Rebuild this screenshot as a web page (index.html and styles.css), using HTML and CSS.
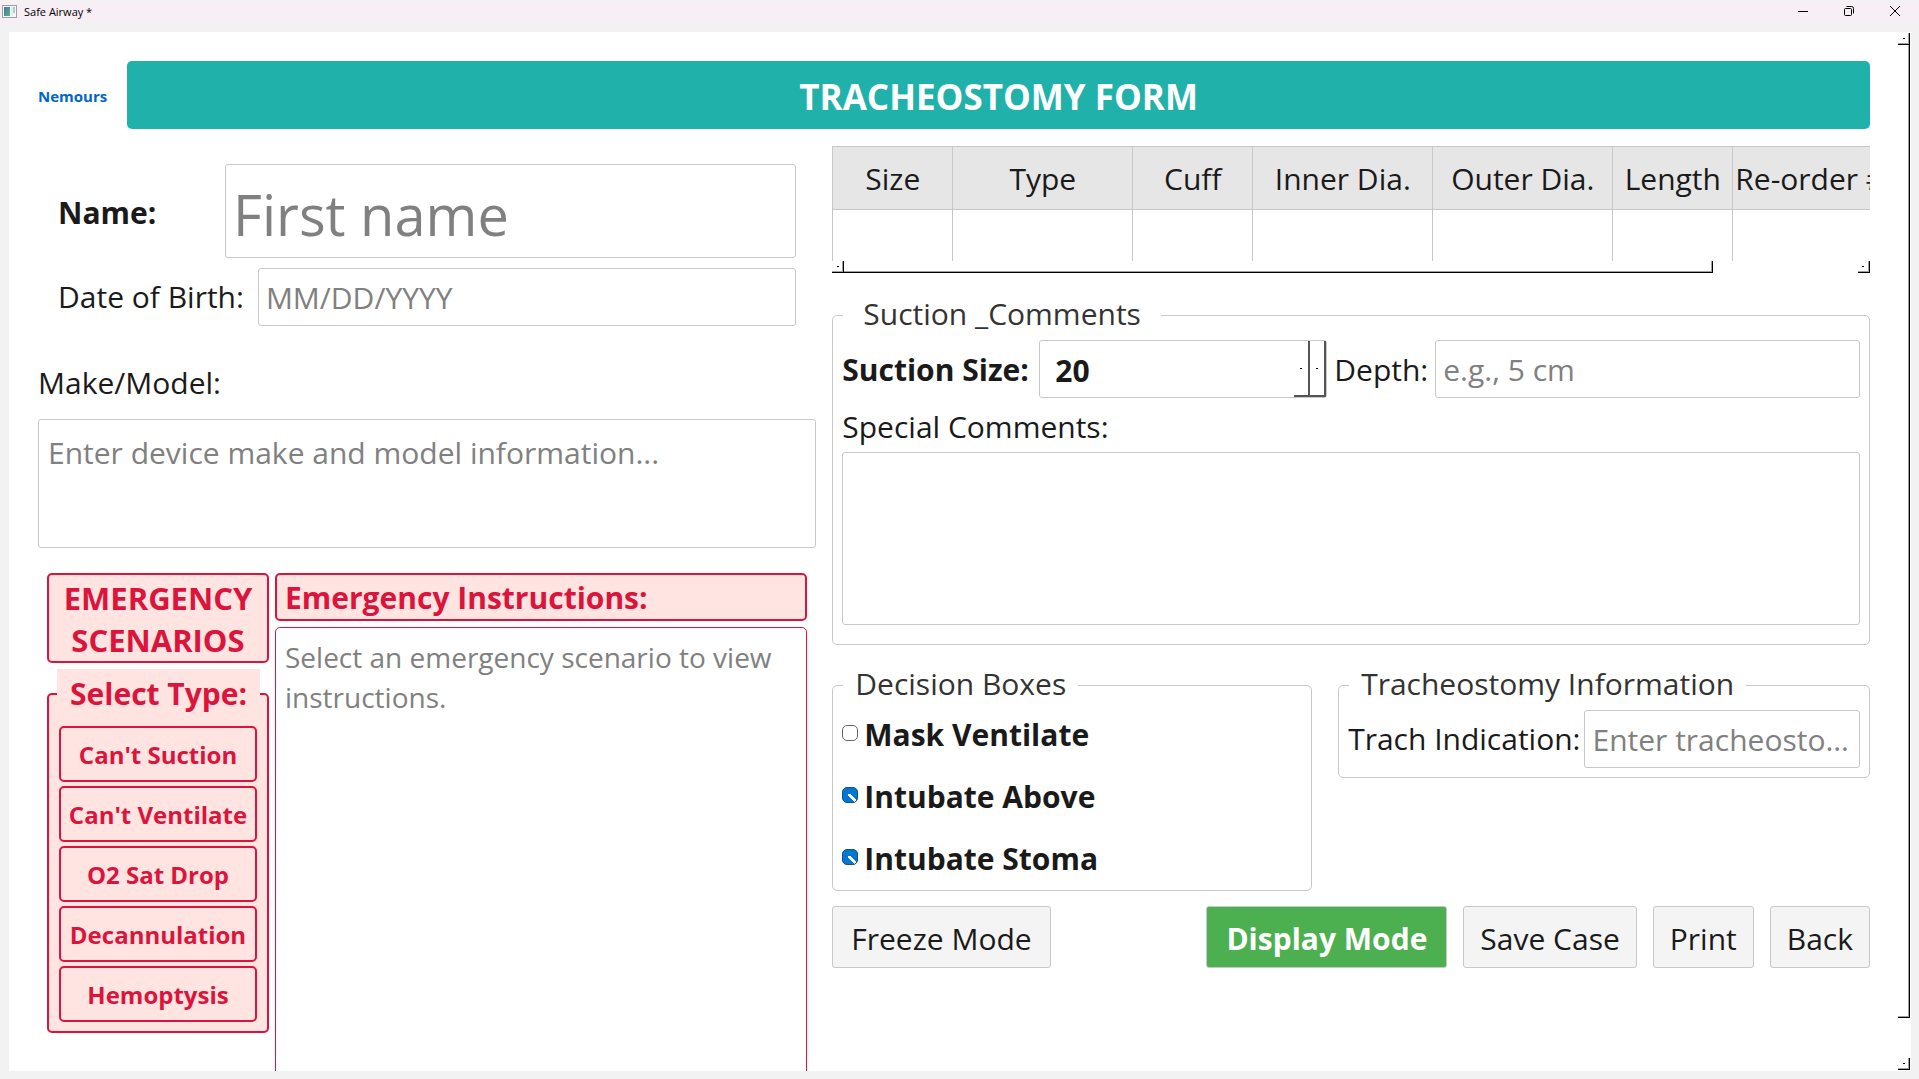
FILE: index.html
```html
<!DOCTYPE html>
<html lang="en">
<head>
<meta charset="utf-8">
<title>Safe Airway *</title>
<link rel="stylesheet" href="styles.css">
</head>
<body>
<header class="titlebar">
  <svg class="app-icon" width="15" height="13" viewBox="0 0 15 13" aria-hidden="true">
    <defs><linearGradient id="pane" x1="0" y1="0" x2="1" y2="1"><stop offset="0" stop-color="#3a7ca8"/><stop offset="1" stop-color="#5fae84"/></linearGradient></defs>
    <rect x="0.5" y="0.5" width="14" height="12" fill="#f4f6f8" stroke="#9aa0a8"/>
    <rect x="2" y="2" width="6" height="9" fill="url(#pane)"/>
    <rect x="9" y="2" width="2" height="9" fill="#e4eaee"/>
    <rect x="11" y="2" width="2" height="6" fill="#a9d0d8"/>
  </svg>
  <span class="app-title">Safe Airway *</span>
  <div class="window-controls">
    <button type="button" aria-label="Minimize"><svg width="12" height="12" viewBox="0 0 12 12"><path d="M1 6.5h10" /></svg></button>
    <button type="button" aria-label="Restore"><svg width="12" height="12" viewBox="0 0 12 12"><rect x="1.500" y="3.500" width="7" height="7" rx="1"/><path d="M3.500 1.500h5q2 0 2 2v5"/></svg></button>
    <button type="button" aria-label="Close"><svg width="12" height="12" viewBox="0 0 12 12"><path d="M1 1l10 10M11 1L1 11"/></svg></button>
  </div>
</header>

<main class="panel">
  <div class="content">
    <div class="banner">
      <a class="brand" href="#">Nemours</a>
      <h1>TRACHEOSTOMY FORM</h1>
    </div>

    <form class="columns">
      <section class="left">
        <div class="identity">
          <div class="field">
            <label class="strong name-label" for="name">Name:</label>
            <input class="name-input" id="name" type="text" placeholder="First name">
          </div>
          <div class="field">
            <label for="dob">Date of Birth:</label>
            <input id="dob" type="text" placeholder="MM/DD/YYYY">
          </div>
        </div>

        <label class="make-label" for="make">Make/Model:</label>
        <textarea class="make" id="make" placeholder="Enter device make and model information..."></textarea>

        <div class="emergency">
          <div class="scenarios">
            <h2 class="alert-title centered">EMERGENCY SCENARIOS</h2>
            <fieldset class="types">
              <legend>Select Type:</legend>
              <button type="button">Can't Suction</button>
              <button type="button">Can't Ventilate</button>
              <button type="button">O2 Sat Drop</button>
              <button type="button">Decannulation</button>
              <button type="button">Hemoptysis</button>
            </fieldset>
          </div>
          <div class="instructions">
            <label class="alert-title" for="steps">Emergency Instructions:</label>
            <textarea class="steps" id="steps" placeholder="Select an emergency scenario to view instructions."></textarea>
          </div>
        </div>
      </section>

      <section class="right">
        <div class="sizes">
          <div class="table-view">
            <table>
              <colgroup><col class="narrow"><col class="wide"><col class="narrow"><col class="wide"><col class="wide"><col class="narrow"><col class="last"></colgroup>
              <thead>
                <tr><th>Size</th><th>Type</th><th>Cuff</th><th>Inner Dia.</th><th>Outer Dia.</th><th>Length</th><th class="reorder">Re-order #</th></tr>
              </thead>
              <tbody>
                <tr><td></td><td></td><td></td><td></td><td></td><td></td><td></td></tr>
              </tbody>
            </table>
          </div>
          <div class="scroll horizontal" aria-hidden="true">
            <span class="arrow"></span><span class="thumb"></span><span class="rest"></span><span class="arrow"></span>
          </div>
        </div>

        <fieldset class="group suction">
          <legend>Suction _Comments</legend>
          <div class="suction-row">
            <label class="strong" for="suction">Suction Size:</label>
            <div class="spin">
              <input class="strong" id="suction" type="number" value="20">
              <button type="button" aria-label="Decrease"></button>
              <button type="button" aria-label="Increase"></button>
            </div>
            <label for="depth">Depth:</label>
            <input class="depth" id="depth" type="text" placeholder="e.g., 5 cm">
          </div>
          <label class="comments-label" for="comments">Special Comments:</label>
          <textarea class="comments" id="comments"></textarea>
        </fieldset>

        <div class="groups">
          <fieldset class="group decisions">
            <legend>Decision Boxes</legend>
            <label class="check strong"><input type="checkbox">Mask Ventilate</label>
            <label class="check strong"><input type="checkbox" checked>Intubate Above</label>
            <label class="check strong"><input type="checkbox" checked>Intubate Stoma</label>
          </fieldset>
          <fieldset class="group trach">
            <legend>Tracheostomy Information</legend>
            <div class="trach-row">
              <label for="indication">Trach Indication:</label>
              <input id="indication" type="text" placeholder="Enter tracheostomy indication">
            </div>
          </fieldset>
        </div>

        <div class="actions">
          <button type="button" class="freeze">Freeze Mode</button>
          <button type="button" class="primary">Display Mode</button>
          <button type="button">Save Case</button>
          <button type="button">Print</button>
          <button type="button">Back</button>
        </div>
      </section>
    </form>
  </div>

  <div class="scroll vertical" aria-hidden="true">
    <span class="arrow"></span><span class="thumb"></span><span class="rest"></span><span class="arrow"></span>
  </div>
</main>
</body>
</html>
```
FILE: styles.css
```css
* { box-sizing: border-box; }

body {
  margin: 0;
  height: 100vh;
  display: flex;
  flex-direction: column;
  overflow: hidden;
  background: #f2f2f2;
  color: #1a1a1a;
  font: 30px/44px "Open Sans", "Noto Sans", sans-serif;
}

h1, h2, fieldset, legend { margin: 0; padding: 0; }

input, textarea, button { font: inherit; color: inherit; margin: 0; }

input, textarea {
  min-width: 0;
  background: #fff;
  border: 1px solid #c8c8c8;
  border-radius: 3px;
  padding: 1px 7px 0;
  height: 58px;
}

textarea { display: block; width: 100%; resize: none; overflow: hidden; }

::placeholder { color: #808080; opacity: 1; }

.strong { font-weight: 700; }

/* Window title bar */
.titlebar {
  display: flex;
  align-items: center;
  height: 23px;
  margin-bottom: 9px;
  padding: 0 18px 2px 2px;
  border-top: 2px solid #f2f2f2;
  background: #f8eef6;
}

.app-title { margin-left: 7px; color: #000; font-size: 11px; line-height: 18px; }

.window-controls { display: flex; gap: 34px; margin-left: auto; padding-bottom: 2px; }

.window-controls button { display: flex; padding: 0; border: 0; background: none; }

.window-controls svg { fill: none; stroke: #000; stroke-width: 1; }

/* Scrolled page */
.panel {
  flex: 1;
  min-height: 0;
  display: flex;
  margin: 0 8px 8px 9px;
  overflow: hidden;
  background: #fff;
}

.content { flex: 1; min-width: 0; padding: 29px 28px 0 29px; }

.banner { display: flex; align-items: center; gap: 20px; }

.brand { padding-top: 2px; color: #06c; font-size: 15px; font-weight: 700; line-height: 20px; text-decoration: none; }

h1 {
  flex: 1;
  padding-top: 4px;
  border-radius: 5px;
  background: #20b2aa;
  color: #fff;
  font-size: 35px;
  line-height: 64px;
  text-align: center;
}

.columns { display: grid; grid-template-columns: minmax(0, 3fr) minmax(0, 4fr); gap: 16px; }

/* Patient and device */
.identity { display: grid; grid-template-columns: minmax(0, 1fr); gap: 10px; padding: 35px 20px 0; }

.field { display: flex; align-items: center; gap: 14px; }

.field input { flex: 1; }

.name-label { min-width: 153px; padding-top: 4px; }

.name-input { height: 94px; padding-top: 6px; font-size: 56px; line-height: 80px; }

.make-label { display: block; padding: 35px 0 14px; }

.make { height: 129px; padding: 11px 9px; }

/* Emergency area */
.emergency {
  display: grid;
  grid-template-columns: 222px minmax(0, 1fr);
  gap: 6px;
  padding: 25px 9px 0;
  color: #dc143c;
  font-weight: 700;
}

.scenarios, .instructions { display: flex; flex-direction: column; gap: 6px; }

.alert-title {
  border: 2px solid #dc143c;
  border-radius: 5px;
  background: #ffe4e1;
  padding: 2px 8px 0;
  line-height: 42px;
}

.centered { font-size: 31px; text-align: center; }

.types {
  min-width: 0;
  border: 2px solid #dc143c;
  border-radius: 5px;
  background: #ffe4e1;
  padding: 7px 10px 5px;
}

.types legend {
  margin-left: -2px;
  padding: 0 13px;
  background: #ffe4e1;
  line-height: 50px;
  white-space: nowrap;
}

.types button {
  display: block;
  width: 100%;
  height: 56px;
  margin-bottom: 4px;
  padding: 2px 0 0;
  border: 2px solid #dc143c;
  border-radius: 5px;
  background: #ffe4e1;
  font-size: 24px;
  line-height: 40px;
}

.steps {
  height: 600px;
  border-color: #dc143c;
  border-radius: 5px;
  padding: 9px 9px;
  font-size: 28px;
  font-weight: 400;
  line-height: 40px;
}

/* Tube sizes table */
.right { padding-top: 17px; }

.table-view { height: 115px; overflow: hidden; }

table { width: 1051px; border-collapse: collapse; table-layout: fixed; }

.narrow { width: 120px; }
.wide { width: 180px; }
.last { width: 150px; }

th, td { border: 1px solid #c8c8c8; }

th { height: 63px; padding: 2px 0 0; overflow: hidden; background: #e6e6e6; font-weight: 400; white-space: nowrap; }

.reorder { text-align: left; padding-left: 2px; }

td { height: 60px; }

/* Flat scroll bars */
.scroll { display: flex; }

.arrow, .thumb { border: solid #000; border-width: 0 1px 1px 0; box-shadow: inset -1px -1px 0 #a0a0a0; }

.arrow { width: 12px; height: 12px; display: grid; place-items: center; }

.arrow::after { content: ""; width: 2px; height: 1px; background: #000; }

.horizontal .thumb { flex: 6; }
.horizontal .rest { flex: 1; }

.vertical { flex-direction: column; padding: 1px 1px 1px 0; }
.vertical .thumb { flex: 24; }
.vertical .rest { flex: 1; }

/* Grouped controls */
.group {
  min-width: 0;
  border: 1px solid #c8c8c8;
  border-radius: 5px;
  padding: 3px 9px 9px;
}

.group legend { margin-left: 1px; padding: 0 12px 2px; color: #333; line-height: 42px; }

.suction { margin-top: 20px; padding-bottom: 19px; }

.suction legend { padding: 0 20px 2px; }

.suction-row { display: grid; grid-template-columns: 190px 288px auto minmax(0, 1fr); align-items: center; gap: 7px; }

.suction-row label { padding-top: 2px; }

.spin {
  display: flex;
  height: 58px;
  border: 1px solid #c8c8c8;
  border-radius: 3px;
}

.spin input { flex: 1; height: 56px; border: 0; padding: 2px 15px 0; appearance: textfield; }

.spin input::-webkit-inner-spin-button { display: none; }

.spin button {
  display: grid;
  place-items: center;
  width: 16px;
  padding: 0;
  border: solid #555;
  border-width: 0 2px 2px 0;
  background: #fff;
}

.spin button::after { content: ""; width: 2px; height: 1px; background: #000; }

.comments-label { display: block; padding: 7px 0 3px; }

.comments { height: 173px; }

.groups { display: grid; grid-template-columns: minmax(0, 480fr) minmax(0, 532fr); align-items: start; gap: 26px; margin-top: 18px; }

.decisions { padding-top: 6px; }

.check { display: flex; align-items: center; gap: 6px; }

.check + .check { margin-top: 18px; }

.check input {
  appearance: none;
  width: 16px;
  height: 16px;
  margin-bottom: 5px;
  padding: 0;
  border: 1px solid #666;
  border-radius: 5px;
}

.check input:checked {
  border-color: #1c4f7c;
  background: #0078d4 linear-gradient(45deg, transparent 40%, #fff 40% 60%, transparent 60%) 100% 100% / 9px 8px no-repeat;
}

.trach-row { display: flex; align-items: center; gap: 4px; }

.trach-row input { flex: 1; padding-right: 2px; text-overflow: ellipsis; }

.actions { display: flex; gap: 16px; margin-top: 15px; }

.actions button {
  height: 62px;
  padding: 4px 16px 0;
  border: 1px solid #c8c8c8;
  border-radius: 3px;
  background: #f4f4f4;
}

.actions .freeze { margin-right: auto; padding: 4px 18px 0; }

.actions .primary { padding: 4px 19px 0; background: #4caf50; color: #fff; font-weight: 700; }
```
